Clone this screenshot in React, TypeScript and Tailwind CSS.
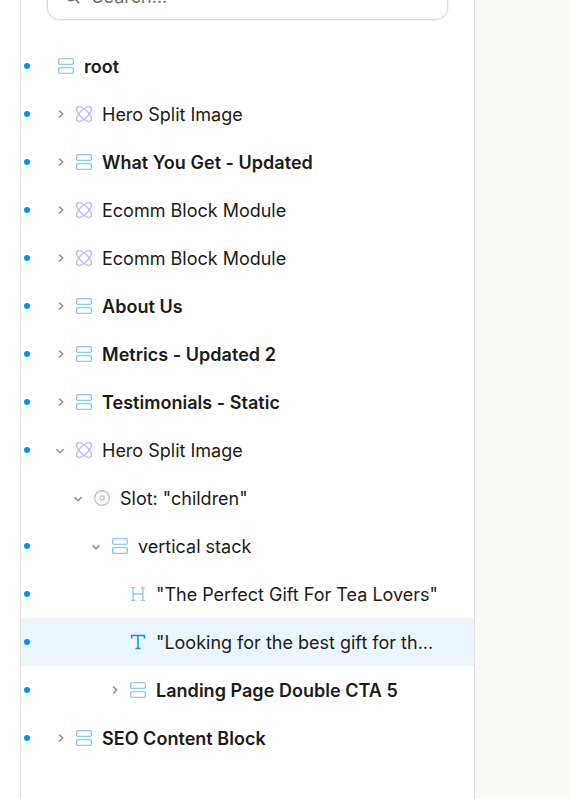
import { ChevronDown, ChevronRight } from "lucide-react";
import { clsx } from "clsx";

type IconKind = "stack" | "component" | "slot" | "heading" | "text";

type TreeNode = {
  label: string;
  icon: IconKind;
  depth: 0 | 1 | 2 | 3 | 4;
  bold?: boolean;
  state?: "open" | "closed";
  dot?: boolean;
  selected?: boolean;
};

const NODES: TreeNode[] = [
  { label: "root", icon: "stack", depth: 0, bold: true },
  { label: "Hero Split Image", icon: "component", depth: 1, state: "closed" },
  { label: "What You Get - Updated", icon: "stack", depth: 1, bold: true, state: "closed" },
  { label: "Ecomm Block Module", icon: "component", depth: 1, state: "closed" },
  { label: "Ecomm Block Module", icon: "component", depth: 1, state: "closed" },
  { label: "About Us", icon: "stack", depth: 1, bold: true, state: "closed" },
  { label: "Metrics - Updated 2", icon: "stack", depth: 1, bold: true, state: "closed" },
  { label: "Testimonials - Static", icon: "stack", depth: 1, bold: true, state: "closed" },
  { label: "Hero Split Image", icon: "component", depth: 1, state: "open" },
  { label: 'Slot: "children"', icon: "slot", depth: 2, state: "open", dot: false },
  { label: "vertical stack", icon: "stack", depth: 3, state: "open" },
  { label: '"The Perfect Gift For Tea Lovers"', icon: "heading", depth: 4 },
  { label: '"Looking for the best gift for th...', icon: "text", depth: 4, selected: true },
  { label: "Landing Page Double CTA 5", icon: "stack", depth: 4, bold: true, state: "closed" },
  { label: "SEO Content Block", icon: "stack", depth: 1, bold: true, state: "closed" },
];

const INDENT = ["pl-[6px]", "pl-[24px]", "pl-[42px]", "pl-[60px]", "pl-[78px]"];

function NodeIcon({ kind, selected }: { kind: IconKind; selected?: boolean }) {
  const purple = kind === "component" || kind === "slot";
  return (
    <svg
      viewBox="0 0 16 16"
      fill="none"
      stroke="currentColor"
      strokeWidth="1.4"
      className={clsx(
        "size-4 shrink-0 overflow-visible",
        purple ? "text-[#d3b4ed]" : selected ? "text-[#0090ff]" : "text-[#8ec8f6]",
      )}
    >
      {kind === "stack" && (
        <>
          <rect x="0.65" y="0.65" width="14.7" height="5.7" rx="1" />
          <rect x="0.65" y="9.65" width="14.7" height="5.7" rx="1" />
        </>
      )}
      {kind === "component" && (
        <>
          <ellipse cx="8" cy="8" rx="9.7" ry="4.1" transform="rotate(45 8 8)" />
          <ellipse cx="8" cy="8" rx="9.7" ry="4.1" transform="rotate(-45 8 8)" />
        </>
      )}
      {kind === "slot" && (
        <>
          <circle cx="8" cy="8" r="7.3" />
          <circle cx="8" cy="8" r="2.1" />
        </>
      )}
      {kind === "heading" && (
        <path d="M3.1 1.6v12.8M12.9 1.6v12.8M3 8h10M1 1.6h4.4M10.6 1.6h4.4M1 14.4h4.4M10.6 14.4h4.4" />
      )}
      {kind === "text" && (
        <path d="M8 1.6v12.8M1.6 4.4V1.6h12.8v2.8M5.5 14.4h5" strokeWidth="1.5" />
      )}
    </svg>
  );
}

function TreeRow({ node }: { node: TreeNode }) {
  return (
    <div className={clsx("flex h-12 items-center pl-[3px]", node.selected && "bg-[#ebf5ff]")}>
      <span
        className={clsx(
          "size-1.5 shrink-0 rounded-full",
          node.dot !== false && "bg-[#0090ff]",
        )}
      />
      <div className={clsx("flex min-w-0 items-center gap-2.5", INDENT[node.depth])}>
        <span className="flex w-3 shrink-0 justify-center text-[#8d8d86]">
          {node.state === "closed" && (
            <ChevronRight className="ml-px size-3.5 shrink-0" strokeWidth={2.7} strokeLinecap="butt" />
          )}
          {node.state === "open" && (
            <ChevronDown className="mt-px size-3.5 shrink-0" strokeWidth={2.7} strokeLinecap="butt" />
          )}
        </span>
        <NodeIcon kind={node.icon} selected={node.selected} />
        <span
          className={clsx(
            "whitespace-nowrap pt-0.5",
            node.bold && "font-semibold tracking-[0.03px]",
          )}
        >
          {node.label}
        </span>
      </div>
    </div>
  );
}

function SearchBox() {
  return (
    <div className="flex h-[42px] flex-col justify-end overflow-hidden px-[26px] pb-[22px]">
      <div className="flex h-12 shrink-0 items-center gap-3 rounded-xl border border-[#dadad7] pl-4 text-[#6f6e69] shadow-[0_0_0_0.5px_#e4e4e1]">
        <svg viewBox="0 0 16 16" fill="none" stroke="currentColor" strokeWidth="1.6" className="size-4">
          <circle cx="7" cy="7" r="5.6" />
          <path d="M11 11l4.2 4.2" />
        </svg>
        <span className="pt-0.5">Search...</span>
      </div>
    </div>
  );
}

export default function App() {
  return (
    <div className="flex h-[799px] overflow-hidden bg-white pl-5 font-['Inter',sans-serif] text-[18px] leading-6 text-[#1b1b18]">
      <aside className="w-[455px] shrink-0 border-x border-l-[#e2e2df] border-r-[#e0e1e8]">
        <SearchBox />
        {NODES.map((node, i) => (
          <TreeRow key={i} node={node} />
        ))}
      </aside>
      <div className="flex-1 bg-[#f9f9f7]" />
    </div>
  );
}
